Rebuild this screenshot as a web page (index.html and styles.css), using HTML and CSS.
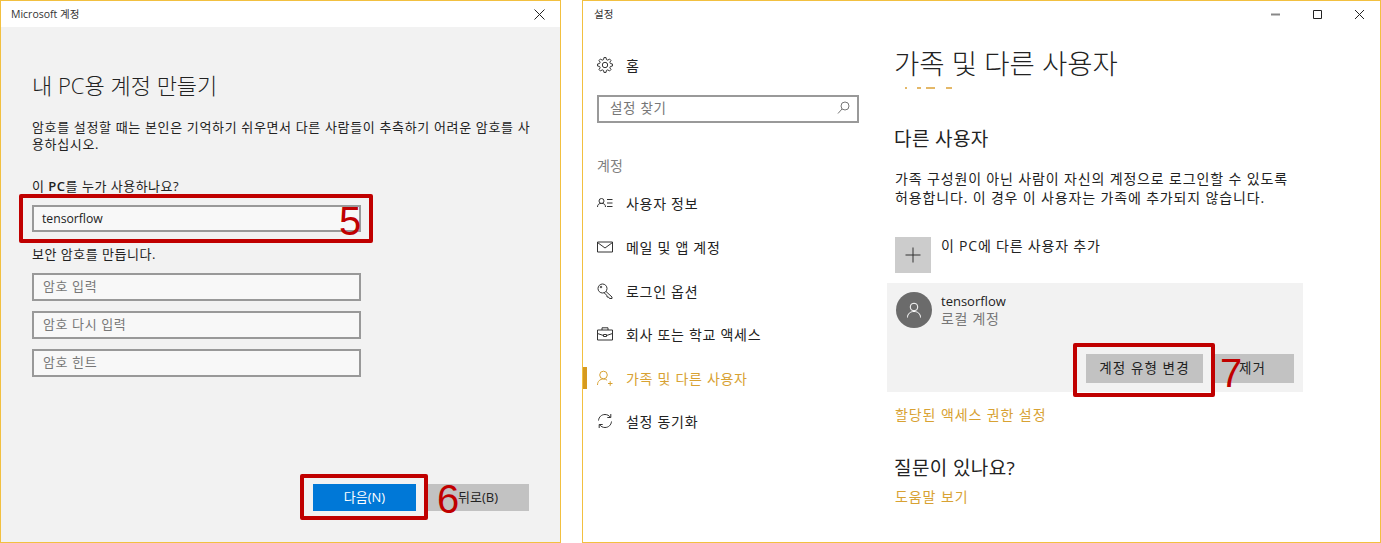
FILE: index.html
```html
<!DOCTYPE html>
<html lang="ko">
<head>
  <meta charset="UTF-8" />
  <title>계정 만들기</title>
  <link rel="stylesheet" href="styles.css">
</head>
<body>
  <div class="screen">

    <div class="window account">
      <div class="titlebar">
        <span class="title">Microsoft 계정</span>
        <svg class="ctl" width="11" height="11" viewBox="0 0 11 11"><path d="M.5.5l10 10M10.5.5l-10 10"/></svg>
      </div>
      <div class="account-body">
        <h1 class="account-head">내 PC용 계정 만들기</h1>
        <p class="account-text">암호를 설정할 때는 본인은 기억하기 쉬우면서 다른 사람들이 추측하기 어려운 암호를 사용하십시오.</p>
        <div class="label label-who">이 <b>PC</b>를 누가 사용하나요?</div>
        <div class="field value">tensorflow</div>
        <div class="label label-pw">보안 암호를 만듭니다.</div>
        <div class="field hint">암호 입력</div>
        <div class="field hint">암호 다시 입력</div>
        <div class="field hint">암호 힌트</div>
        <div class="account-btns">
          <div class="btn primary">다음(N)</div>
          <div class="btn wide">뒤로(B)</div>
        </div>
      </div>
      <div class="mark mark-5"></div>
      <div class="step step-5">5</div>
      <div class="mark mark-6"></div>
      <div class="step step-6">6</div>
    </div>

    <div class="window settings">
      <div class="titlebar">
        <span class="title">설정</span>
        <div class="ctls">
          <svg class="ctl" width="11" height="11" viewBox="0 0 11 11"><path class="min" d="M1 5.500h9"/></svg>
          <svg class="ctl" width="11" height="11" viewBox="0 0 11 11"><path d="M1.500 1.500h8v8h-8z"/></svg>
          <svg class="ctl" width="11" height="11" viewBox="0 0 11 11"><path d="M1 1l9 9M10 1l-9 9"/></svg>
        </div>
      </div>
      <div class="settings-body">
        <div class="sidebar">
          <div class="nav-row home">
            <svg class="ico" width="16" height="16" viewBox="0 0 16 16"><path d="M15.43 9.04 13.41 9.45 12.85 10.8 13.99 12.51 12.51 13.99 10.8 12.85 9.45 13.41 9.04 15.43 6.96 15.43 6.55 13.41 5.2 12.85 3.49 13.99 2.01 12.51 3.15 10.8 2.59 9.45 .57 9.04 .57 6.96 2.59 6.55 3.15 5.2 2.01 3.49 3.49 2.01 5.2 3.15 6.55 2.59 6.96 .57 9.04 .57 9.45 2.59 10.8 3.15 12.51 2.01 13.99 3.49 12.85 5.2 13.41 6.55 15.43 6.96z"/><circle cx="8" cy="8" r="2.7"/></svg>
            <span>홈</span>
          </div>
          <div class="search">
            <span>설정 찾기</span>
            <svg class="ico faint" width="13" height="13" viewBox="0 0 13 13"><circle cx="8" cy="5" r="4"/><path d="M5 8l-4 4.500"/></svg>
          </div>
          <div class="nav-head">계정</div>
          <div class="nav-row">
            <svg class="ico" width="16" height="16" viewBox="0 0 16 16"><circle cx="4.500" cy="6" r="2.500"/><path d="M.5 12c0-2.500 1.500-3.700 4-3.700s4 1.200 4 3.700M10 4.500h5.500M10 8h5.500M10 11.500h5.500"/></svg>
            <span>사용자 정보</span>
          </div>
          <div class="nav-row">
            <svg class="ico" width="16" height="16" viewBox="0 0 16 16"><path d="M.5 3h15v10H.5zM.5 3.500 8 9l7.500-5.500"/></svg>
            <span>메일 및 앱 계정</span>
          </div>
          <div class="nav-row">
            <svg class="ico" width="16" height="16" viewBox="0 0 16 16"><circle cx="5.500" cy="5.500" r="4.500"/><circle cx="4" cy="4" r=".8"/><path d="M9 8.500l6 5.500v1.500h-2.500l-1-1.500h-1.500v-1.500l-3-2.800"/></svg>
            <span>로그인 옵션</span>
          </div>
          <div class="nav-row">
            <svg class="ico" width="16" height="16" viewBox="0 0 16 16"><path d="M.5 4h15v10H.5zM5 4V1.800h6V4M.5 7.500 6.500 9.500M15.500 7.500 9.500 9.500M6.500 8.500h3v2h-3z"/></svg>
            <span>회사 또는 학교 액세스</span>
          </div>
          <div class="nav-row active">
            <svg class="ico" width="16" height="16" viewBox="0 0 16 16"><circle cx="6.500" cy="5" r="3.800"/><path d="M.5 15c0-3.700 2.500-6 6-6 1.500 0 2.700.4 3.600 1.200M11 13.500h4.500M13.200 11.200v4.600"/></svg>
            <span>가족 및 다른 사용자</span>
          </div>
          <div class="nav-row">
            <svg class="ico" width="16" height="16" viewBox="0 0 16 16"><path d="M1.500 7.500C1.800 4 4.500 1.500 8 1.500c2.200 0 4.200 1 5.400 2.800M14.500 8.500c-.3 3.500-3 6-6.500 6-2.200 0-4.200-1-5.400-2.800M13.800 1v3.500h-3.500M2.200 15v-3.500h3.500"/></svg>
            <span>설정 동기화</span>
          </div>
        </div>

        <div class="main">
          <h1 class="main-head">가족 및 다른 사용자</h1>
          <div class="clipped"><i></i><i></i><i></i><i></i></div>
          <h2 class="sub-head first">다른 사용자</h2>
          <p class="main-text">가족 구성원이 아닌 사람이 자신의 계정으로 로그인할 수 있도록<br>허용합니다. 이 경우 이 사용자는 가족에 추가되지 않습니다.</p>
          <div class="add-row">
            <div class="tile">
              <svg class="ico" width="16" height="16" viewBox="0 0 16 16"><path d="M8 .5v15M.5 8h15"/></svg>
            </div>
            <span>이 PC에 다른 사용자 추가</span>
          </div>
          <div class="user-card">
            <div class="user">
              <div class="avatar">
                <svg width="16" height="16" viewBox="0 0 16 16"><circle cx="8" cy="5" r="3.800"/><path d="M1.500 15.500c0-3.700 2.700-6 6.500-6s6.500 2.300 6.500 6"/></svg>
              </div>
              <div>
                <div class="user-name">tensorflow</div>
                <div class="user-type">로컬 계정</div>
              </div>
            </div>
            <div class="user-btns">
              <div class="btn change">계정 유형 변경</div>
              <div class="btn remove">제거</div>
            </div>
          </div>
          <a class="link first-link">할당된 액세스 권한 설정</a>
          <h2 class="sub-head second">질문이 있나요?</h2>
          <a class="link help-link">도움말 보기</a>
        </div>
      </div>
      <div class="mark mark-7"></div>
      <div class="step step-7">7</div>
    </div>

  </div>
</body>
</html>
```

FILE: styles.css
```css
* {
  box-sizing: border-box;
}
html, body {
  margin: 0;
  height: 100%;
  overflow: hidden;
  background: #fff;
}
body {
  font-family: "Open Sans", "Noto Sans CJK KR", sans-serif;
  color: #222;
}
.screen {
  display: flex;
  justify-content: space-between;
  height: 543px;
}
.window {
  border: 1px solid #f2c040;
  display: flex;
  flex-direction: column;
}
.account {
  width: 561px;
  background: #f2f2f2;
}
.settings {
  width: 799px;
  background: #fff;
}
.titlebar {
  height: 26px;
  flex: none;
  background: #fff;
  display: flex;
  align-items: center;
  justify-content: space-between;
  padding: 0 15px 0 10px;
}
.title {
  font-size: 10.5px;
  color: #333;
  margin-top: -2px;
}
.settings .title {
  padding-left: 1px;
}
.ctl {
  fill: none;
  stroke: #222;
  stroke-width: 1;
}
.ctl .min {
  stroke: #888;
  stroke-width: 2;
}
.ctls {
  display: flex;
  gap: 31px;
}

/* left window */
.account-body {
  padding-left: 31px;
  position: relative;
  flex: 1;
}
.account-head {
  margin: 40px 0 0;
  font-size: 22px;
  line-height: 36px;
  font-weight: 300;
}
.account-text {
  margin: 16px 0 0;
  width: 505px;
  font-size: 13px;
  line-height: 17px;
  letter-spacing: .65px;
}
.label {
  font-size: 13px;
  line-height: 18px;
  letter-spacing: .5px;
}
.label-who {
  margin-top: 24px;
}
.label-who b {
  font-weight: 600;
}
.label-pw {
  margin: 13px 0 10px;
}
.field {
  width: 329px;
  height: 28px;
  border: 2px solid #999;
  background: #f8f8f8;
  font-size: 13px;
  line-height: 23px;
  padding-left: 9px;
  margin-bottom: 10px;
}
.value {
  margin: 10px 0 0;
  height: 27px;
  font-size: 12.2px;
  padding-left: 8px;
}
.hint {
  color: #777;
  letter-spacing: .6px;
}
.account-btns {
  position: absolute;
  right: 31px;
  top: 457px;
  display: flex;
  gap: 11px;
}
.btn {
  background: #c2c2c2;
  font-size: 13px;
  line-height: 27px;
  text-align: center;
}
.btn.primary {
  background: #0078d7;
  color: #fff;
  width: 103px;
}
.btn.wide {
  width: 102px;
}

/* right window */
.settings-body {
  display: flex;
  flex: 1;
}
.sidebar {
  width: 304px;
  flex: none;
  padding-top: 16px;
}
.nav-row {
  height: 43.6px;
  display: flex;
  align-items: center;
  gap: 13px;
  padding-left: 14px;
  font-size: 14px;
  letter-spacing: .7px;
  position: relative;
}
.ico {
  fill: none;
  stroke: #333;
  stroke-width: 1;
  flex: none;
}
.ico.faint {
  stroke: #777;
}
.search {
  margin: 8px 0 0 14px;
  width: 262px;
  height: 28px;
  border: 2px solid #999;
  display: flex;
  align-items: center;
  justify-content: space-between;
  padding: 0 7px 3px 11px;
  font-size: 13.5px;
  letter-spacing: .7px;
  color: #777;
}
.nav-head {
  margin: 33px 0 6px 14px;
  font-size: 14px;
  line-height: 20px;
  color: #808080;
}
.nav-row.active {
  color: #d8a233;
}
.nav-row.active .ico {
  stroke: #d8a233;
}
.nav-row.active::before {
  content: "";
  position: absolute;
  left: 0;
  top: 11px;
  width: 4px;
  height: 22px;
  background: #d69a1f;
}
.main {
  width: 416px;
}
.main-head,
.sub-head,
.add-row {
  margin-left: 7px;
}
.add-row {
  margin-left: 8px;
}
.main-head {
  margin-top: 19px;
  margin-bottom: 0;
  font-size: 27.5px;
  line-height: 36px;
  font-weight: 300;
}
.clipped {
  margin: 5px 0 0 18px;
  height: 2px;
  display: flex;
}
.clipped i {
  background: #e4b868;
}
.clipped i:nth-child(1) {
  width: 2px;
}
.clipped i:nth-child(2) {
  width: 4px;
  margin-left: 10px;
}
.clipped i:nth-child(3) {
  width: 9px;
  margin-left: 5px;
}
.clipped i:nth-child(4) {
  width: 6px;
  margin-left: 11px;
}
.sub-head {
  font-size: 19px;
  line-height: 24px;
  font-weight: 400;
  margin-bottom: 0;
  letter-spacing: .4px;
}
.sub-head.first {
  margin-top: 38px;
}
.sub-head.second {
  margin-top: 32px;
}
.main-text {
  margin: 18px 0 0 8px;
  font-size: 14px;
  line-height: 19px;
  letter-spacing: .85px;
  white-space: nowrap;
}
.add-row {
  margin-top: 30px;
  display: flex;
  gap: 10px;
  font-size: 14px;
  line-height: 17px;
  letter-spacing: .8px;
  height: 36px;
}
.tile {
  width: 36px;
  height: 36px;
  background: #ccc;
  display: flex;
  align-items: center;
  justify-content: center;
}
.user-card {
  margin-top: 10px;
  height: 109px;
  padding: 9px;
  background: #f2f2f2;
}
.user {
  display: flex;
  gap: 9px;
  height: 36px;
  margin-bottom: 26px;
}
.avatar {
  width: 36px;
  height: 36px;
  border-radius: 50%;
  background: #6b6b6b;
  display: flex;
  align-items: center;
  justify-content: center;
}
.avatar svg {
  fill: none;
  stroke: #fff;
  stroke-width: 1;
}
.user-name {
  font-size: 13px;
  line-height: 17px;
  margin-top: 1px;
}
.user-type {
  font-size: 14px;
  line-height: 17px;
  letter-spacing: .7px;
  color: #777;
}
.user-btns {
  display: flex;
  justify-content: flex-end;
  gap: 8px;
}
.change, .remove {
  font-size: 13.5px;
  line-height: 29px;
  letter-spacing: 1.1px;
}
.change {
  width: 117px;
}
.remove {
  width: 83px;
}
.link {
  display: block;
  font-size: 14px;
  line-height: 19px;
  letter-spacing: .9px;
  margin-left: 8px;
  color: #d8a233;
}
.first-link {
  margin-top: 13px;
}
.help-link {
  margin-top: 7px;
}

/* red call-outs */
.mark {
  position: absolute;
  border: 4px solid #c00000;
  border-radius: 2px;
}
.mark-5 {
  left: 19px;
  top: 194px;
  width: 354px;
  height: 49px;
}
.mark-6 {
  left: 300px;
  top: 474px;
  width: 128px;
  height: 46px;
}
.mark-7 {
  left: 1073px;
  top: 343px;
  width: 142px;
  height: 54px;
}
.step {
  position: absolute;
  font-family: "Liberation Sans", sans-serif;
  font-size: 40px;
  line-height: 40px;
  letter-spacing: -3px;
  color: #c00000;
}
.step-5 {
  left: 339px;
  top: 201px;
}
.step-6 {
  left: 437px;
  top: 479px;
}
.step-7 {
  left: 1220px;
  top: 353px;
}
```
